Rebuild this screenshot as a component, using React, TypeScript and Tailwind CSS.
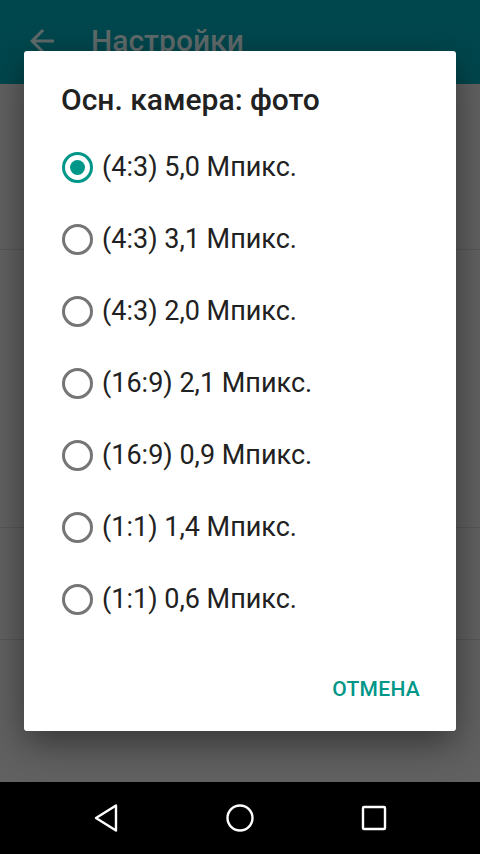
import { useState } from "react";

const options = [
  "(4:3) 5,0 Мпикс.",
  "(4:3) 3,1 Мпикс.",
  "(4:3) 2,0 Мпикс.",
  "(16:9) 2,1 Мпикс.",
  "(16:9) 0,9 Мпикс.",
  "(1:1) 1,4 Мпикс.",
  "(1:1) 0,6 Мпикс.",
];

export default function App() {
  const [selected, setSelected] = useState(0);
  return (
    <div
      className="relative w-[480px] h-[854px] overflow-hidden flex flex-col bg-[#616161]"
      style={{ fontFamily: "Roboto, 'Noto Sans', sans-serif" }}
    >
      {/* dimmed page behind */}
      <div className="h-[84px] bg-[#00474d] flex items-center pl-[24px] gap-[31px] shrink-0">
        <svg width="36" height="36" viewBox="0 0 24 24" className="mt-[-2px]">
          <path d="M20 11H7.83l5.59-5.59L12 4l-8 8 8 8 1.41-1.41L7.83 13H20v-2z" fill="#5f6a6b" />
        </svg>
        <div className="text-[30px] font-medium text-[#5f6a6b] leading-none mt-[-2px]">Настройки</div>
      </div>
      <div className="flex-1 flex flex-col">
        <div className="h-[166px] border-b border-[#575757]" />
        <div className="h-[278px] border-b border-[#575757]" />
        <div className="h-[112px] border-b border-[#575757]" />
      </div>
      <div className="h-[72px] bg-black flex items-center justify-center gap-[104px] shrink-0">
        <svg width="30" height="30" viewBox="0 0 30 30">
          <path d="M25 2.5 L25 27.5 L5 15 Z" fill="none" stroke="#fff" strokeWidth="2.4" strokeLinejoin="round" />
        </svg>
        <svg width="30" height="30" viewBox="0 0 30 30">
          <circle cx="15" cy="15" r="12.5" fill="none" stroke="#fff" strokeWidth="2.4" />
        </svg>
        <svg width="30" height="30" viewBox="0 0 30 30">
          <rect x="4" y="4" width="22" height="22" rx="1" fill="none" stroke="#fff" strokeWidth="2.4" />
        </svg>
      </div>

      {/* dialog */}
      <div className="absolute left-[24px] top-[51px] w-[432px] h-[680px] bg-white rounded-[3px] shadow-[0_12px_36px_rgba(0,0,0,0.45)] flex flex-col">
        <div className="pl-[37px] pt-[31px] pb-[13px] text-[30px] font-medium text-[#212121] leading-[36px]">
          Осн. камера: фото
        </div>
        <div className="flex flex-col">
          {options.map((label, i) => (
            <div
              key={label}
              onClick={() => setSelected(i)}
              className="h-[72px] flex items-center pl-[38px] gap-[9px] cursor-pointer"
            >
              <div
                className={
                  i === selected
                    ? "w-[31px] h-[31px] rounded-full border-[3px] border-[#009688] flex items-center justify-center"
                    : "w-[31px] h-[31px] rounded-full border-[3px] border-[#757575] flex items-center justify-center"
                }
              >
                {i === selected && <div className="w-[15px] h-[15px] rounded-full bg-[#009688]" />}
              </div>
              <div className="text-[27px] text-[#212121] leading-none">{label}</div>
            </div>
          ))}
        </div>
        <div className="flex-1" />
        <div className="flex justify-end pr-[36px] pb-[26px]">
          <button className="text-[21px] font-medium text-[#009688] tracking-[0.3px]">ОТМЕНА</button>
        </div>
      </div>
    </div>
  );
}
